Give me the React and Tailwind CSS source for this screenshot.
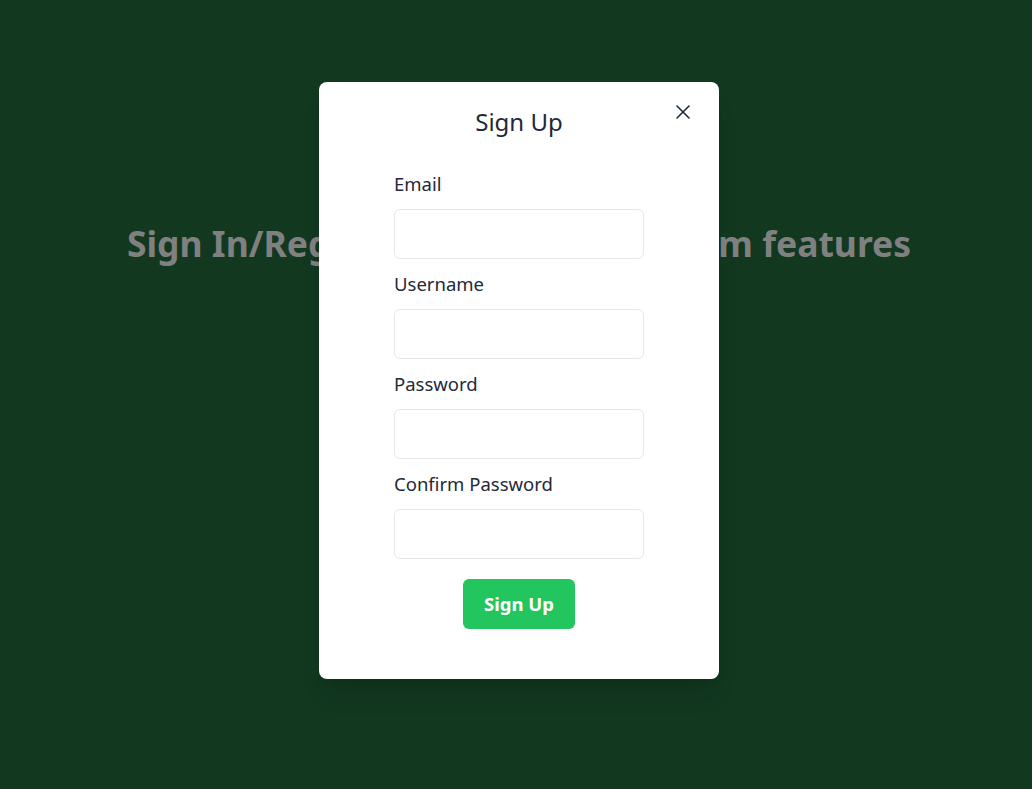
import { X } from "lucide-react";

const fields = ["Email", "Username", "Password", "Confirm Password"];

export default function App() {
  return (
    <div
      className="relative min-h-[789px] w-full bg-[#123820] overflow-hidden"
      style={{ fontFamily: '"Noto Sans", "Open Sans", sans-serif' }}
    >
      {/* page behind the overlay */}
      <div className="flex flex-col items-center pt-[219px]">
        <h1 className="text-[35.5px] leading-[48px] font-bold text-[#808080] pl-[6px]">
          Sign In/Register to access premium features
        </h1>
      </div>

      {/* modal */}
      <div className="absolute left-[319px] top-[82px] w-[400px] bg-white rounded-lg shadow-xl pt-[22px] pb-[50px]">
        <button className="absolute right-[24px] top-[18px] text-gray-800">
          <X className="w-[24px] h-[24px]" strokeWidth={1.6} />
        </button>
        <h2 className="text-center text-[24px] leading-[36px] text-gray-800">Sign Up</h2>
        <form className="w-[250px] mx-auto mt-[31px] flex flex-col">
          {fields.map((f) => (
            <div key={f} className="flex flex-col">
              <label className="text-[18.5px] leading-[26px] text-gray-800 mb-[12px]">{f}</label>
              <input
                type={f.includes("Password") ? "password" : "text"}
                className="h-[50px] border border-gray-200 rounded-md px-3 mb-[12px] outline-none"
              />
            </div>
          ))}
          <button
            type="button"
            className="self-center mt-[8px] w-[112px] h-[50px] bg-[#22c55e] text-white font-bold text-[18.5px] rounded-md"
          >
            Sign Up
          </button>
        </form>
      </div>
    </div>
  );
}
